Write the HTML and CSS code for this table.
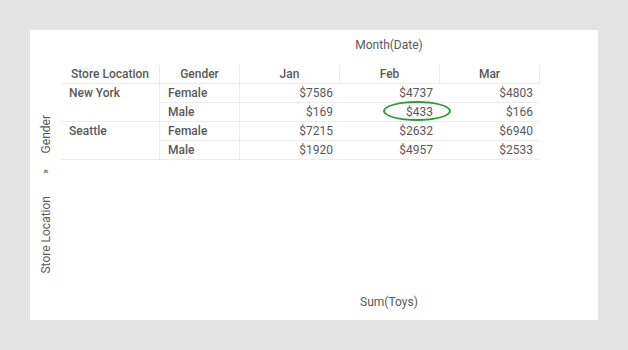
FILE: index.html
```html
<!DOCTYPE html>
<html>
<head>
<meta charset="utf-8">
<link rel="stylesheet" href="styles.css">
</head>
<body>
<div class="panel">
  <div class="rail">
    <span class="vlabel">Gender</span>
    <span class="vsep">»</span>
    <span class="vlabel">Store Location</span>
  </div>
  <div class="main">
    <div class="axis-title top">Month(Date)</div>
    <table class="pivot">
      <colgroup>
        <col class="c-loc"><col class="c-gen"><col class="c-m"><col class="c-m"><col class="c-m">
      </colgroup>
      <thead>
        <tr>
          <th class="h sep">Store Location</th>
          <th class="h sep">Gender</th>
          <th class="h sep">Jan</th>
          <th class="h sep">Feb</th>
          <th class="h sep">Mar</th>
        </tr>
      </thead>
      <tbody>
        <tr>
          <td class="lbl sep line" rowspan="2">New York</td>
          <td class="lbl sep line">Female</td>
          <td class="val line">$7586</td>
          <td class="val line">$4737</td>
          <td class="val line">$4803</td>
        </tr>
        <tr>
          <td class="lbl sep line">Male</td>
          <td class="val line">$169</td>
          <td class="val line mark"><span class="ring"></span>$433</td>
          <td class="val line">$166</td>
        </tr>
        <tr>
          <td class="lbl sep line" rowspan="2">Seattle</td>
          <td class="lbl sep line">Female</td>
          <td class="val line">$7215</td>
          <td class="val line">$2632</td>
          <td class="val line">$6940</td>
        </tr>
        <tr>
          <td class="lbl sep line">Male</td>
          <td class="val line">$1920</td>
          <td class="val line">$4957</td>
          <td class="val line">$2533</td>
        </tr>
      </tbody>
    </table>
    <div class="grow"></div>
    <div class="axis-title bottom">Sum(Toys)</div>
  </div>
</div>
</body>
</html>
```
FILE: styles.css
```css
html, body {
  margin: 0;
  padding: 0;
  background: #e3e3e3;
}
body {
  font-family: Roboto, "Liberation Sans", sans-serif;
  font-size: 12px;
  color: #595959;
}
.panel {
  margin: 30px 0 0 30px;
  width: 568px;
  height: 290px;
  background: #fff;
  display: flex;
}
.rail {
  width: 31px;
  display: flex;
  flex-direction: column;
  align-items: center;
  padding-top: 85px;
  box-sizing: border-box;
}
.vlabel {
  writing-mode: vertical-rl;
  transform: rotate(180deg);
  line-height: 14px;
  white-space: nowrap;
}
.vsep {
  writing-mode: vertical-rl;
  transform: rotate(180deg);
  font-size: 10px;
  line-height: 10px;
  margin: 16px 0 22px;
}
.main {
  flex: 1;
  display: flex;
  flex-direction: column;
}
.axis-title {
  width: 300px;
  margin-left: 178px;
  text-align: center;
}
.axis-title.top {
  height: 35px;
  line-height: 30px;
}
.axis-title.bottom {
  line-height: 16px;
  margin-bottom: 10px;
}
.grow { flex: 1; }
.pivot {
  border-collapse: separate;
  border-spacing: 0;
  table-layout: fixed;
  width: 479px;
}
.c-loc { width: 99px; }
.c-gen { width: 80px; }
.c-m { width: 100px; }
.pivot th, .pivot td {
  padding: 0;
  height: 18px;
  line-height: 14px;
  vertical-align: middle;
  white-space: nowrap;
  border-right: 1px solid transparent;
}
.pivot .h {
  font-weight: 500;
  text-align: center;
  border-bottom: 1px solid #ececec;
}
.pivot .sep { border-right: 1px solid #ececec; }
.pivot .line { border-bottom: 1px solid #ececec; }
.pivot .lbl {
  font-weight: 500;
  text-align: left;
  padding-left: 8px;
  vertical-align: top;
  padding-top: 2px;
  height: 16px;
}
.pivot .val {
  text-align: right;
  padding-right: 6px;
}
.pivot .mark { position: relative; }
.ring {
  position: absolute;
  left: 43px;
  top: -2px;
  width: 68px;
  height: 20px;
  border: 2px solid #2a9a3a;
  border-radius: 50%;
  box-sizing: border-box;
}
```
